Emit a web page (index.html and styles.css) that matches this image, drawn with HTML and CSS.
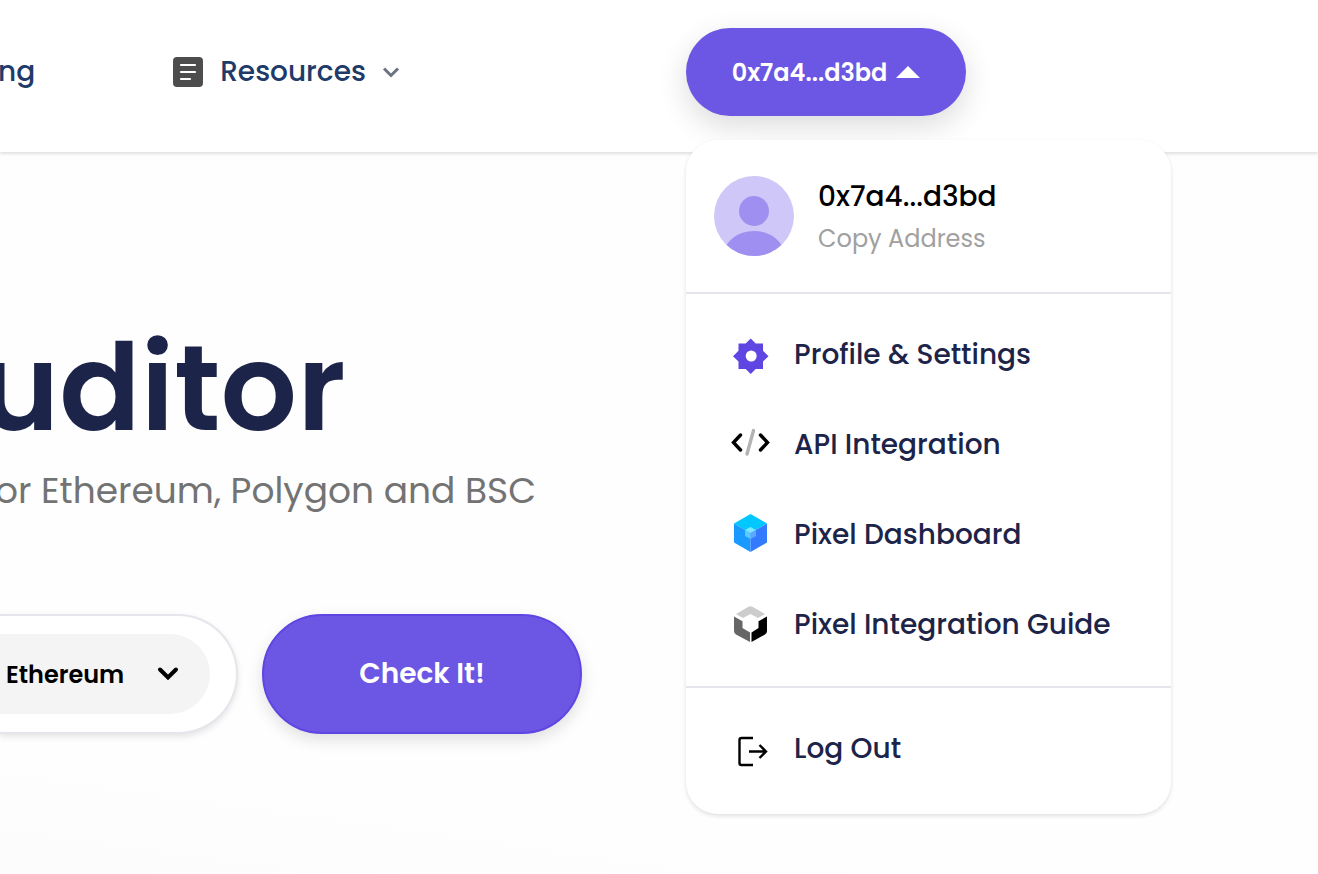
FILE: index.html
```html
<!DOCTYPE html>
<html lang="en">
<head>
<meta charset="utf-8">
<meta name="viewport" content="width=device-width, initial-scale=1">
<title>Auditor</title>
<link rel="stylesheet" href="styles.css">
</head>
<body>
<header class="header">
  <nav class="nav">
    <a class="nav-link" href="#">ng</a>
    <button class="nav-link nav-menu" type="button">
      <svg class="nav-icon" viewBox="0 0 30 30" width="30" height="30" aria-hidden="true">
        <rect width="30" height="30" rx="4" fill="#4d4d4d"/>
        <path d="M8 8h14M8 15h14M8 22h9" stroke="#fff" stroke-width="2.2" stroke-linecap="round"/>
      </svg>
      <span>Resources</span>
      <svg width="16" height="12" viewBox="0 0 16 12" fill="none" aria-hidden="true">
        <path d="M1 2.500l7 7 7-7" stroke="#6b7280" stroke-width="3"/>
      </svg>
    </button>
  </nav>
  <div class="wallet">
    <button class="wallet-button" type="button" aria-expanded="true">
      <span>0x7a4...d3bd</span>
      <svg width="24" height="12" viewBox="0 0 24 12" aria-hidden="true"><path d="M0 12L12 0l12 12z" fill="#fff"/></svg>
    </button>
    <div class="menu">
      <div class="account">
        <svg class="avatar" width="80" height="80" viewBox="0 0 80 80" aria-hidden="true">
          <clipPath id="avatar-clip"><circle cx="40" cy="40" r="40"/></clipPath>
          <g clip-path="url(#avatar-clip)">
            <rect width="80" height="80" fill="#cfc7f8"/>
            <circle cx="40" cy="35" r="15" fill="#9f8ff0"/>
            <ellipse cx="40" cy="79" rx="30" ry="24" fill="#9f8ff0"/>
          </g>
        </svg>
        <div class="account-text">
          <span class="account-name">0x7a4...d3bd</span>
          <button class="copy" type="button">Copy Address</button>
        </div>
      </div>
      <div class="menu-list">
        <a class="menu-item" href="#">
          <svg width="40" height="40" viewBox="0 0 40 40" aria-hidden="true">
            <path d="M20.700 3.500l5 5h7.300v7.300l5.500 5.500-5.500 5.200V34h-7.300l-5 5-5-5H8.500v-7.500l-5.500-5.200 5.500-5.500V8.500h7.200z" fill="#5f45e2"/>
            <circle cx="21.200" cy="21" r="5.500" fill="#fff"/>
          </svg>
          <span>Profile &amp; Settings</span>
        </a>
        <a class="menu-item" href="#">
          <svg width="40" height="40" viewBox="0 0 40 40" fill="none" stroke-linecap="round" aria-hidden="true">
            <path d="M23.500 5.500L17 29" stroke="#b3b3b3" stroke-width="3.400"/>
            <path d="M10.500 10L3.500 17.500l7 7.500M30.500 10l7 7.500-7 7.500" stroke="#000" stroke-width="3.400"/>
          </svg>
          <span>API Integration</span>
        </a>
        <a class="menu-item" href="#">
          <svg width="40" height="40" viewBox="0 0 40 40" aria-hidden="true">
            <path d="M20.500-1L37 8.500 20.500 18 4 8.500z" fill="#00c8ff"/>
            <path d="M4 8.500L20.500 18v19L4 27.500z" fill="#1a99ff"/>
            <path d="M37 8.500L20.500 18v19L37 27.500z" fill="#337aff"/>
            <path d="M20.500 12l5.500 3-5.500 3-5.500-3z" fill="#7de7ff"/>
            <path d="M15 15l5.500 3v6L15 21z" fill="#5ccaff"/>
            <path d="M26 15l-5.500 3v6l5.500-3z" fill="#5aa8ff"/>
          </svg>
          <span>Pixel Dashboard</span>
        </a>
        <a class="menu-item" href="#">
          <svg width="40" height="40" viewBox="0 0 40 40" aria-hidden="true">
            <path d="M6 9L18.500 1.800q2-1 4 0L35 9l-7 4-7.500-4-7.500 4z" fill="#ccc"/>
            <path d="M4 11.500l8.500 4.800v6.700l7.500 4.500v9.500L6 29.500q-2-1.200-2-3.500z" fill="#666"/>
            <path d="M37 11.500l-8.500 4.800v6.700L21.500 27.500v9.500L35 29.500q2-1.200 2-3.500z" fill="#000"/>
          </svg>
          <span>Pixel Integration Guide</span>
        </a>
      </div>
      <div class="menu-list menu-footer">
        <a class="menu-item" href="#">
          <svg width="40" height="40" viewBox="0 0 40 40" fill="none" stroke="#000" stroke-width="2.400" aria-hidden="true">
            <path d="M23 9H11.500q-2 0-2 2v23q0 2 2 2H23M19 22.500h17M29.500 16l6.500 6.500-6.500 6.500"/>
          </svg>
          <span>Log Out</span>
        </a>
      </div>
    </div>
  </div>
</header>
<main class="hero">
  <h1 class="title">uditor</h1>
  <p class="subtitle">or Ethereum, Polygon and BSC</p>
  <form class="search">
    <div class="field">
      <div class="network">
        <select class="network-select" aria-label="Network"><option>Ethereum</option></select>
        <svg class="network-arrow" width="20" height="14" viewBox="0 0 20 14" fill="none" aria-hidden="true">
          <path d="M2 2.500l8 8 8-8" stroke="#000" stroke-width="4" stroke-linecap="round"/>
        </svg>
      </div>
    </div>
    <button class="check" type="button">Check It!</button>
  </form>
</main>
</body>
</html>
```
FILE: styles.css
```css
* {
  box-sizing: border-box;
}

body {
  margin: 0;
  min-height: 100vh;
  overflow-x: hidden;
  background: linear-gradient(188deg, #fefefe 88%, #fcfcfc);
  color: #1d2449;
  font-family: Poppins, Inter, "Open Sans", sans-serif;
}

button,
select {
  font: inherit;
  border: 0;
  cursor: pointer;
}

a {
  color: inherit;
  text-decoration: none;
}

svg {
  flex: none;
  display: block;
  overflow: visible;
}

.header {
  display: grid;
  grid-template-columns: 686px 1fr;
  align-items: center;
  padding: 28px 0 36px;
  background: #fff;
  box-shadow: 0 2px 3px rgba(0, 0, 0, 0.12);
}

.nav {
  display: flex;
  align-items: center;
  gap: 138px;
  margin-left: -2px;
}

.nav-link {
  color: #203a69;
  font-size: 28px;
  line-height: 40px;
  font-weight: 500;
}

.nav-menu {
  display: flex;
  align-items: center;
  gap: 17px;
  padding: 0;
  background: none;
}

.wallet {
  position: relative;
  justify-self: start;
}

.wallet-button {
  display: flex;
  align-items: center;
  justify-content: center;
  gap: 9px;
  width: 280px;
  height: 88px;
  border-radius: 44px;
  background: #6c56e4;
  color: #fff;
  font-size: 24px;
  font-weight: 600;
  box-shadow: 0 10px 30px rgba(0, 0, 0, 0.14);
}

.menu {
  position: absolute;
  top: 112px;
  left: 0;
  width: 485px;
  border-radius: 32px;
  background: #fff;
  box-shadow: 0 2px 4px rgba(0, 0, 0, 0.12);
}

.account {
  display: flex;
  align-items: center;
  gap: 24px;
  padding: 35px 28px;
  border-bottom: 2px solid #e5e5ec;
}

.account-text {
  display: flex;
  flex-direction: column;
  align-items: flex-start;
  gap: 2px;
}

.account-name {
  color: #000;
  font-size: 28px;
  line-height: 44px;
  font-weight: 500;
}

.copy {
  padding: 0;
  background: none;
  color: #a0a0a0;
  font-size: 24px;
  line-height: 36px;
}

.menu-list {
  padding: 16px 44px;
}

.menu-item {
  display: flex;
  align-items: center;
  gap: 24px;
  height: 90px;
  font-size: 28px;
  font-weight: 500;
  white-space: nowrap;
}

.menu-footer {
  padding-bottom: 20px;
  border-top: 2px solid #e5e5ec;
}

.hero {
  padding-top: 162px;
}

.title {
  margin: 0 0 0 -20px;
  font-size: 120px;
  line-height: 148px;
  font-weight: 600;
}

.subtitle {
  margin: 0 0 0 -5px;
  color: #737373;
  font-size: 36px;
  line-height: 58px;
}

.search {
  display: flex;
  gap: 24px;
  margin-top: 94px;
}

.field {
  display: flex;
  align-items: center;
  width: 238px;
  height: 120px;
  padding-right: 26px;
  border: 2px solid #e5e5ec;
  border-left: 0;
  border-radius: 0 60px 60px 0;
  background: #fff;
  box-shadow: 0 3px 6px rgba(0, 0, 0, 0.1);
}

.network {
  position: relative;
  flex: 1;
}

.network-select {
  appearance: none;
  width: 100%;
  height: 80px;
  padding: 0 56px 0 6px;
  border-radius: 0 40px 40px 0;
  background: #f4f4f4;
  color: #000;
  font-size: 24px;
  font-weight: 600;
}

.network-arrow {
  position: absolute;
  top: 33px;
  right: 32px;
  pointer-events: none;
}

.check {
  width: 320px;
  height: 120px;
  border: 2px solid #5f45e2;
  border-radius: 60px;
  background: #6c56e4;
  color: #fff;
  font-size: 28px;
  font-weight: 600;
  box-shadow: 0 6px 16px rgba(0, 0, 0, 0.12);
}
```
